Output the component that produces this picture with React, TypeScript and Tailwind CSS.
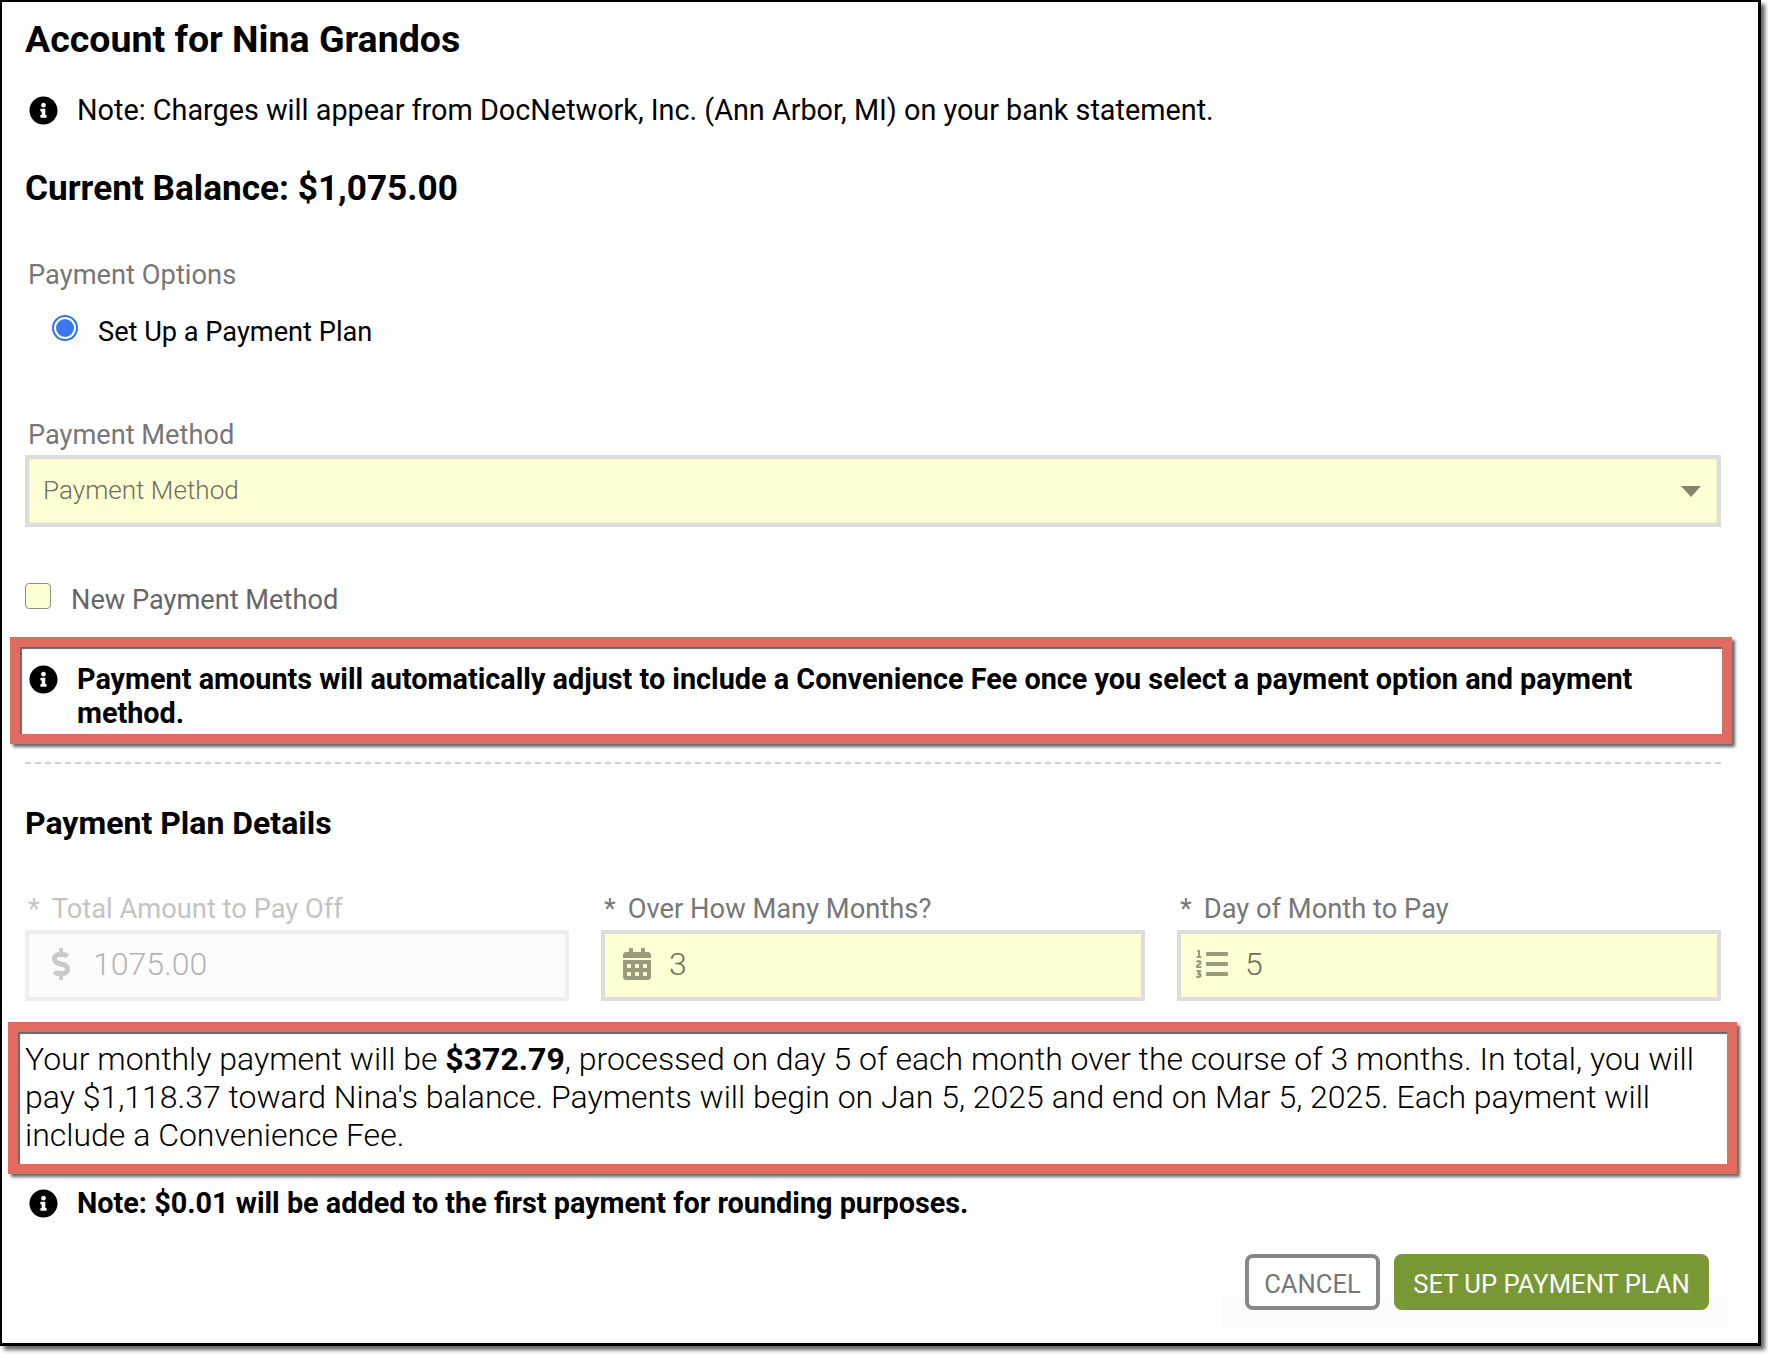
import { FaCalendarAlt, FaDollarSign, FaInfoCircle, FaListOl } from "react-icons/fa";

function InfoNote({ children, bold }: { children: React.ReactNode; bold?: boolean }) {
  return (
    <div className={`flex h-8 items-center pt-[2px] text-[28.8px] leading-8 text-black ${bold ? "font-bold" : ""}`}>
      <FaInfoCircle className="mr-[19px] ml-[4px] size-[29px] shrink-0 text-black" />
      <span>{children}</span>
    </div>
  );
}

function FieldLabel({ text, disabled }: { text: string; disabled?: boolean }) {
  return (
    <div className={`flex h-[30px] items-center pl-[3px] text-[27.3px] leading-[30px] ${disabled ? "text-[#c4c4c4]" : "text-[#777]"}`}>
      <span className="mr-[12px]">*</span>
      {text}
    </div>
  );
}

function PlanInput({ icon, value, disabled }: { icon: React.ReactNode; value: string; disabled?: boolean }) {
  return (
    <div
      className={`flex h-[71px] items-center border-4 pb-[4px] pl-4 text-[32px] font-light ${
        disabled
          ? "border-[#eeeeee] bg-[#fcfcfc] text-[#b4b4b4]"
          : "border-[#dddddd] bg-[#ffffd5] text-[#6f6f58]"
      }`}
    >
      {icon}
      <span>{value}</span>
    </div>
  );
}

export default function App() {
  return (
    <div className="min-h-[1354px] bg-white font-['Roboto',sans-serif]">
      <div className="h-[1346px] w-[1761px] border-t-2 border-r-[3px] border-b-[3px] border-l-2 border-black bg-white pl-[23px] shadow-[4px_4px_4px_#666]">
        <div className="w-[1696px]">
          <h1 className="mt-[17px] h-10 text-[37.5px] leading-10 font-bold text-black">Account for Nina Grandos</h1>

          <div className="mt-[34px]">
            <InfoNote>Note: Charges will appear from DocNetwork, Inc. (Ann Arbor, MI) on your bank statement.</InfoNote>
          </div>

          <h2 className="mt-[43px] h-10 text-[35.2px] leading-10 font-bold text-black">Current Balance: $1,075.00</h2>

          <div className="mt-[51px] h-[30px] pt-px pl-[3px] text-[27.3px] leading-[30px] text-[#777]">Payment Options</div>

          <div className="mt-[27px] flex h-[30px] items-center pt-[2px] pl-[27px] text-[27.2px] leading-[30px] text-black">
            <span className="-mt-[8px] mr-[20px] flex size-[26px] items-center justify-center rounded-full border-2 border-[#2f74ef] bg-white">
              <span className="size-[18px] rounded-full bg-[#3b78f0]" />
            </span>
            Set Up a Payment Plan
          </div>

          <div className="mt-[73px] h-[30px] pt-px pl-[3px] text-[27.2px] leading-[30px] text-[#777]">Payment Method</div>

          <div className="mt-[6px] flex h-[72px] items-center justify-between border-4 border-[#dddddd] bg-[#ffffd5] pr-4 pl-[14px] text-[26.1px] font-light text-[#6f6f58] shadow-[inset_0_0_2px_#d8d8a8]">
            <span>Payment Method</span>
            <svg width="20" height="11" viewBox="0 0 20 11">
              <path d="M0 0h20L10 11z" fill="#85856a" />
            </svg>
          </div>

          <div className="mt-[57px] flex h-[30px] items-center pt-[2px] text-[27.2px] leading-[30px] text-[#666]">
            <span className="-mt-[8px] mr-5 size-[26px] rounded-[4px] border border-[#8f8f7c] bg-[#ffffd5]" />
            New Payment Method
          </div>

          <div className="mt-[23px] -ml-[15px] h-[107px] w-[1722px] border-10 border-[#e06c5f] pt-[15px] pl-[5px] shadow-[3px_3px_3px_#666,inset_2px_2px_1px_#666]">
            <div className="flex text-[28.8px] leading-[34px] font-bold text-black">
              <FaInfoCircle className="mt-[3px] mr-[19px] ml-[4px] size-[29px] shrink-0" />
              <span>Payment amounts will automatically adjust to include a Convenience Fee once you select a payment option and payment method.</span>
            </div>
          </div>

          <div className="mt-[18px] border-t-2 border-dashed border-[#d0d0d0]" />

          <h3 className="mt-[41px] h-9 text-[32px] leading-9 font-bold text-black">Payment Plan Details</h3>

          <div className="mt-[53px] grid grid-cols-3 gap-x-[32px]">
            <div>
              <FieldLabel text="Total Amount to Pay Off" disabled />
              <div className="mt-[6px]">
                <PlanInput disabled value="1075.00" icon={<FaDollarSign className="mr-[16px] size-8 shrink-0 text-[#c9c9c9]" />} />
              </div>
            </div>
            <div>
              <FieldLabel text="Over How Many Months?" />
              <div className="mt-[6px]">
                <PlanInput value="3" icon={<FaCalendarAlt className="mr-[16px] size-8 shrink-0 text-[#9a9a7d]" />} />
              </div>
            </div>
            <div>
              <FieldLabel text="Day of Month to Pay" />
              <div className="mt-[6px]">
                <PlanInput value="5" icon={<FaListOl className="mr-[17px] -ml-px size-8 shrink-0 text-[#9a9a7d]" />} />
              </div>
            </div>
          </div>

          <div className="mt-[21px] -ml-[17px] h-[152px] w-[1729px] border-10 border-[#e06c5f] pt-[8px] pl-[7px] text-[32px] leading-[38px] font-light text-black shadow-[3px_3px_3px_#666,inset_2px_2px_1px_#666]">
            Your monthly payment will be <b className="font-bold">$372.79</b>, processed on day 5 of each month over the course of 3 months. In total, you will pay $1,118.37 toward Nina's balance. Payments will begin on Jan 5, 2025 and end on Mar 5, 2025. Each payment will include a Convenience Fee.
          </div>

          <div className="mt-[12px]">
            <InfoNote bold>Note: $0.01 will be added to the first payment for rounding purposes.</InfoNote>
          </div>

          <div className="relative mt-[36px] flex justify-end gap-[14px] pr-[12px]">
            <div className="absolute top-[43px] right-[-8px] h-[31px] w-[507px] bg-[#fbfbfb]" />
            <button className="relative h-14 w-[135px] rounded-lg border-4 border-[#888] bg-white pt-[5px] text-[25.6px] text-[#777]">CANCEL</button>
            <button className="relative h-14 w-[315px] rounded-lg bg-[#789835] pt-[5px] text-[25.6px] text-white">SET UP PAYMENT PLAN</button>
          </div>
        </div>
      </div>
    </div>
  );
}
